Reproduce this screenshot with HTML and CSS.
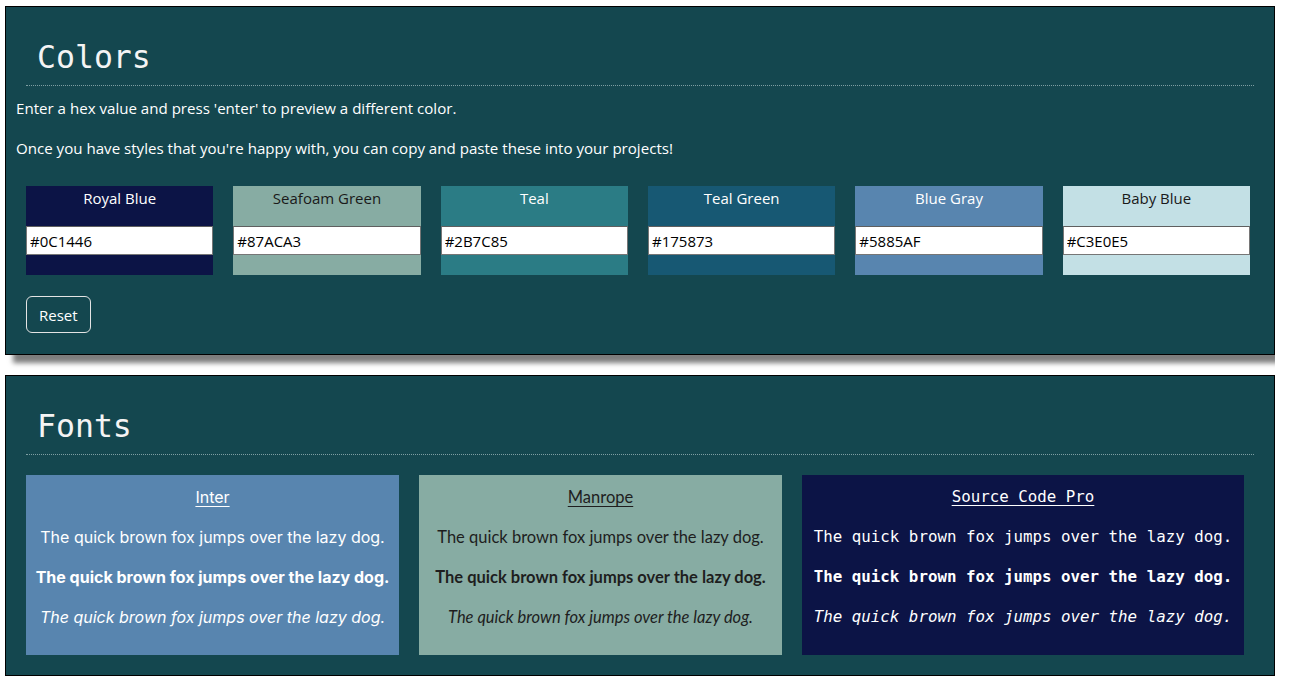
FILE: index.html
```html
<!DOCTYPE html>
<html lang="en">
<head>
<meta charset="utf-8">
<title>Colors and Fonts</title>
<link rel="stylesheet" href="styles.css">
</head>
<body>
<section class="panel">
  <div class="panel-head"><h1 class="panel-title">Colors</h1></div>
  <p class="note">Enter a hex value and press 'enter' to preview a different color.</p>
  <p class="note">Once you have styles that you're happy with, you can copy and paste these into your projects!</p>
  <div class="swatches">
    <div class="swatch sw-royal"><div class="swatch-name">Royal Blue</div><input class="swatch-input" type="text" value="#0C1446"></div>
    <div class="swatch sw-seafoam dark"><div class="swatch-name">Seafoam Green</div><input class="swatch-input" type="text" value="#87ACA3"></div>
    <div class="swatch sw-teal"><div class="swatch-name">Teal</div><input class="swatch-input" type="text" value="#2B7C85"></div>
    <div class="swatch sw-tealgreen"><div class="swatch-name">Teal Green</div><input class="swatch-input" type="text" value="#175873"></div>
    <div class="swatch sw-bluegray"><div class="swatch-name">Blue Gray</div><input class="swatch-input" type="text" value="#5885AF"></div>
    <div class="swatch sw-baby dark"><div class="swatch-name">Baby Blue</div><input class="swatch-input" type="text" value="#C3E0E5"></div>
  </div>
  <div class="actions"><button class="reset" type="button">Reset</button></div>
</section>

<section class="panel panel-fonts">
  <div class="panel-head"><h1 class="panel-title">Fonts</h1></div>
  <div class="cards">
    <div class="card card-inter">
      <p class="card-title">Inter</p>
      <p>The quick brown fox jumps over the lazy dog.</p>
      <p class="b">The quick brown fox jumps over the lazy dog.</p>
      <p class="i">The quick brown fox jumps over the lazy dog.</p>
    </div>
    <div class="card card-manrope">
      <p class="card-title">Manrope</p>
      <p>The quick brown fox jumps over the lazy dog.</p>
      <p class="b">The quick brown fox jumps over the lazy dog.</p>
      <p class="i">The quick brown fox jumps over the lazy dog.</p>
    </div>
    <div class="card card-source">
      <p class="card-title">Source Code Pro</p>
      <p>The quick brown fox jumps over the lazy dog.</p>
      <p class="b">The quick brown fox jumps over the lazy dog.</p>
      <p class="i">The quick brown fox jumps over the lazy dog.</p>
    </div>
  </div>
</section>
</body>
</html>
```

FILE: styles.css
```css
html, body {
  background: #ffffff;
}
body {
  margin: 6px 15px 0 5px;
  font-family: "Open Sans", "Noto Sans", sans-serif;
}
.panel {
  background: #14474f;
  border: 1px solid #000;
  box-shadow: 8px 8px 5px #7d7d7d;
  padding: 0 10px 21px;
  color: #fff;
}
.panel-fonts {
  margin-top: 20px;
  padding-bottom: 20px;
}
.panel-head {
  margin: 0 10px;
  padding: 30px 0 8px 11px;
  border-bottom: 1px dotted #7e9ea2;
}
.panel-title {
  margin: 0;
  font-family: "DejaVu Sans Mono", monospace;
  font-weight: 400;
  font-size: 31.5px;
  line-height: 40px;
  color: #f4f4f4;
}
.note {
  margin: 10px 0 16px;
  font-size: 15.1px;
  line-height: 24px;
}
.swatches {
  display: grid;
  grid-template-columns: repeat(6, 1fr);
  gap: 20px;
  margin: 26px 14px 0 10px;
}
.swatch {
  height: 89px;
  display: flex;
  flex-direction: column;
  color: #fff;
}
.swatch.dark {
  color: #1a1a1a;
}
.sw-royal { background: #0c1446; }
.sw-seafoam { background: #87aca3; }
.sw-teal { background: #2b7c85; }
.sw-tealgreen { background: #175873; }
.sw-bluegray { background: #5885af; }
.sw-baby { background: #c3e0e5; }
.swatch-name {
  height: 40px;
  line-height: 24px;
  text-align: center;
  font-size: 15px;
}
.swatch-input {
  box-sizing: border-box;
  width: 100%;
  height: 29px;
  margin: 0;
  padding: 0 3px;
  border: 1px solid #767676;
  border-top-color: #5f5f5f;
  background: #fff;
  color: #000;
  font-family: "Open Sans", "Noto Sans", sans-serif;
  font-size: 15px;
}
.actions {
  display: flex;
  margin: 21px 0 0 10px;
}
.reset {
  height: 37px;
  padding: 0 12px;
  border: 1px solid #e4e4e4;
  border-radius: 6px;
  background: transparent;
  color: #fff;
  font-family: "Open Sans", "Noto Sans", sans-serif;
  font-size: 15px;
}
.cards {
  display: flex;
  gap: 20px;
  margin: 20px 10px 0;
}
.card {
  flex: none;
  box-sizing: border-box;
  height: 180px;
  padding: 10px 0;
  text-align: center;
  white-space: nowrap;
  font-size: 16px;
}
.card p {
  margin: 0 0 16px;
  line-height: 24px;
}
.card .b { font-weight: 700; }
.card .i { font-style: italic; }
.card .card-title {
  text-decoration: underline;
  text-underline-offset: 3px;
}
.card-inter {
  width: 373px;
  background: #5885af;
  color: #fff;
  font-family: "Inter", sans-serif;
}
.card-manrope {
  width: 363px;
  background: #87aca3;
  color: #1e1e1e;
  font-family: "Lato", sans-serif;
  font-size: 16.5px;
}
.card-source {
  width: 442px;
  background: #0c1446;
  color: #fff;
  font-family: "DejaVu Sans Mono", monospace;
  font-size: 15.8px;
}
```
